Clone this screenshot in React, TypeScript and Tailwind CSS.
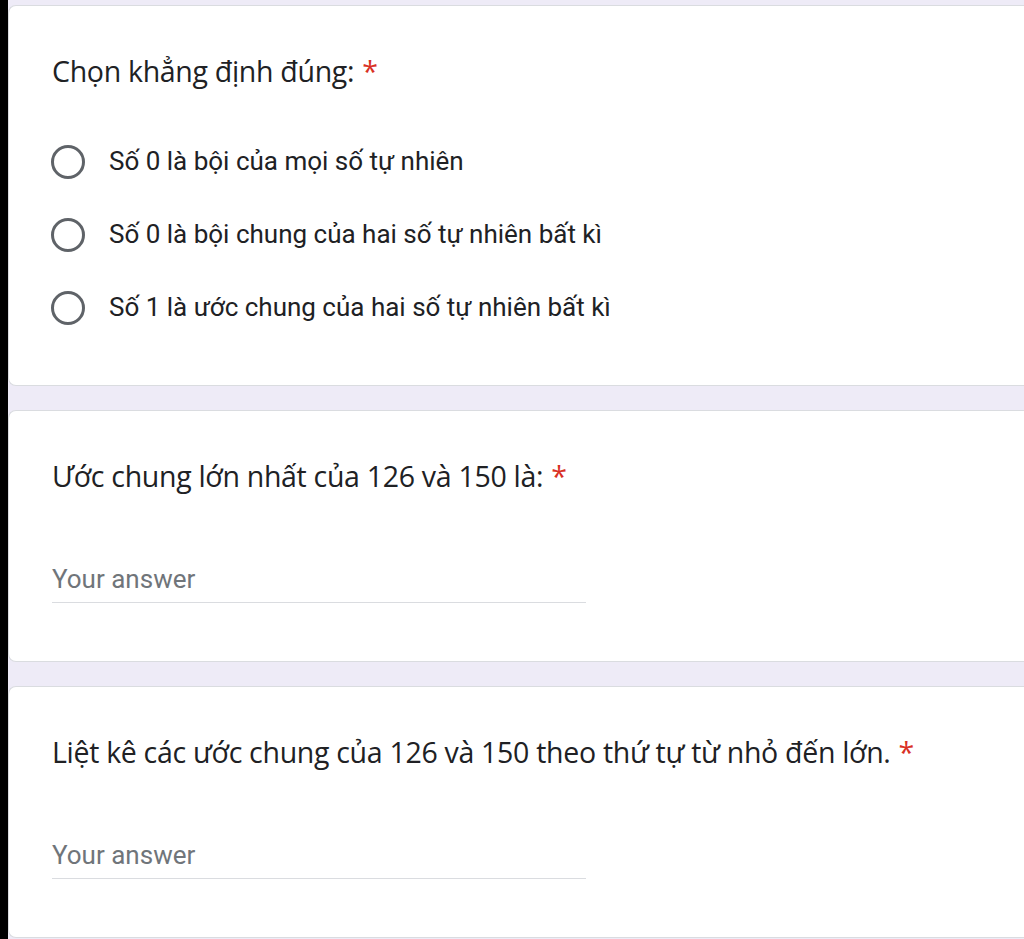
import React from 'react';

const titleFont = { fontFamily: '"Open Sans", "Noto Sans", sans-serif' };

const Title: React.FC<{ text: string }> = ({ text }) => (
  <div className="h-[36px] flex items-center text-[28.5px] tracking-[-0.3px] text-[#202124] whitespace-nowrap" style={titleFont}>
    <span>{text}</span>
    <span className="ml-[8px] text-[#d93025]">*</span>
  </div>
);

const Radio: React.FC<{ label: string }> = ({ label }) => (
  <div className="h-[73px] flex items-center">
    <div className="w-[34px] h-[34px] -ml-[1px] rounded-full border-[3px] border-[#5f6368] shrink-0" />
    <span className="ml-[24px] text-[26px] text-[#202124] font-['Roboto',sans-serif]">{label}</span>
  </div>
);

const ShortAnswer = () => (
  <div className="mt-[70px] w-[534px] border-b border-[#dadce0] pb-[8px]">
    <div className="h-[30px] flex items-center text-[26px] text-[#70757a] font-['Roboto',sans-serif]">
      Your answer
    </div>
  </div>
);

const Card: React.FC<{ children: React.ReactNode; className?: string }> = ({ children, className = '' }) => (
  <section className={`bg-white rounded-l-lg border border-r-0 border-[#dadce0] pl-[43px] pt-[47px] ${className}`}>
    {children}
  </section>
);

export default function App() {
  return (
    <div className="flex h-[939px] w-full overflow-hidden bg-black">
      <div className="w-[8px] shrink-0 bg-black" />
      <main className="flex-1 bg-[#eeebf7] pt-[5px] flex flex-col gap-[24px]">
        <Card className="h-[381px]">
          <Title text="Chọn khẳng định đúng:" />
          <div className="mt-[36px]">
            <Radio label="Số 0 là bội của mọi số tự nhiên" />
            <Radio label="Số 0 là bội chung của hai số tự nhiên bất kì" />
            <Radio label="Số 1 là ước chung của hai số tự nhiên bất kì" />
          </div>
        </Card>
        <Card className="h-[252px]">
          <Title text="Ước chung lớn nhất của 126 và 150 là:" />
          <ShortAnswer />
        </Card>
        <Card className="h-[252px]">
          <Title text="Liệt kê các ước chung của 126 và 150 theo thứ tự từ nhỏ đến lớn." />
          <ShortAnswer />
        </Card>
      </main>
    </div>
  );
}
